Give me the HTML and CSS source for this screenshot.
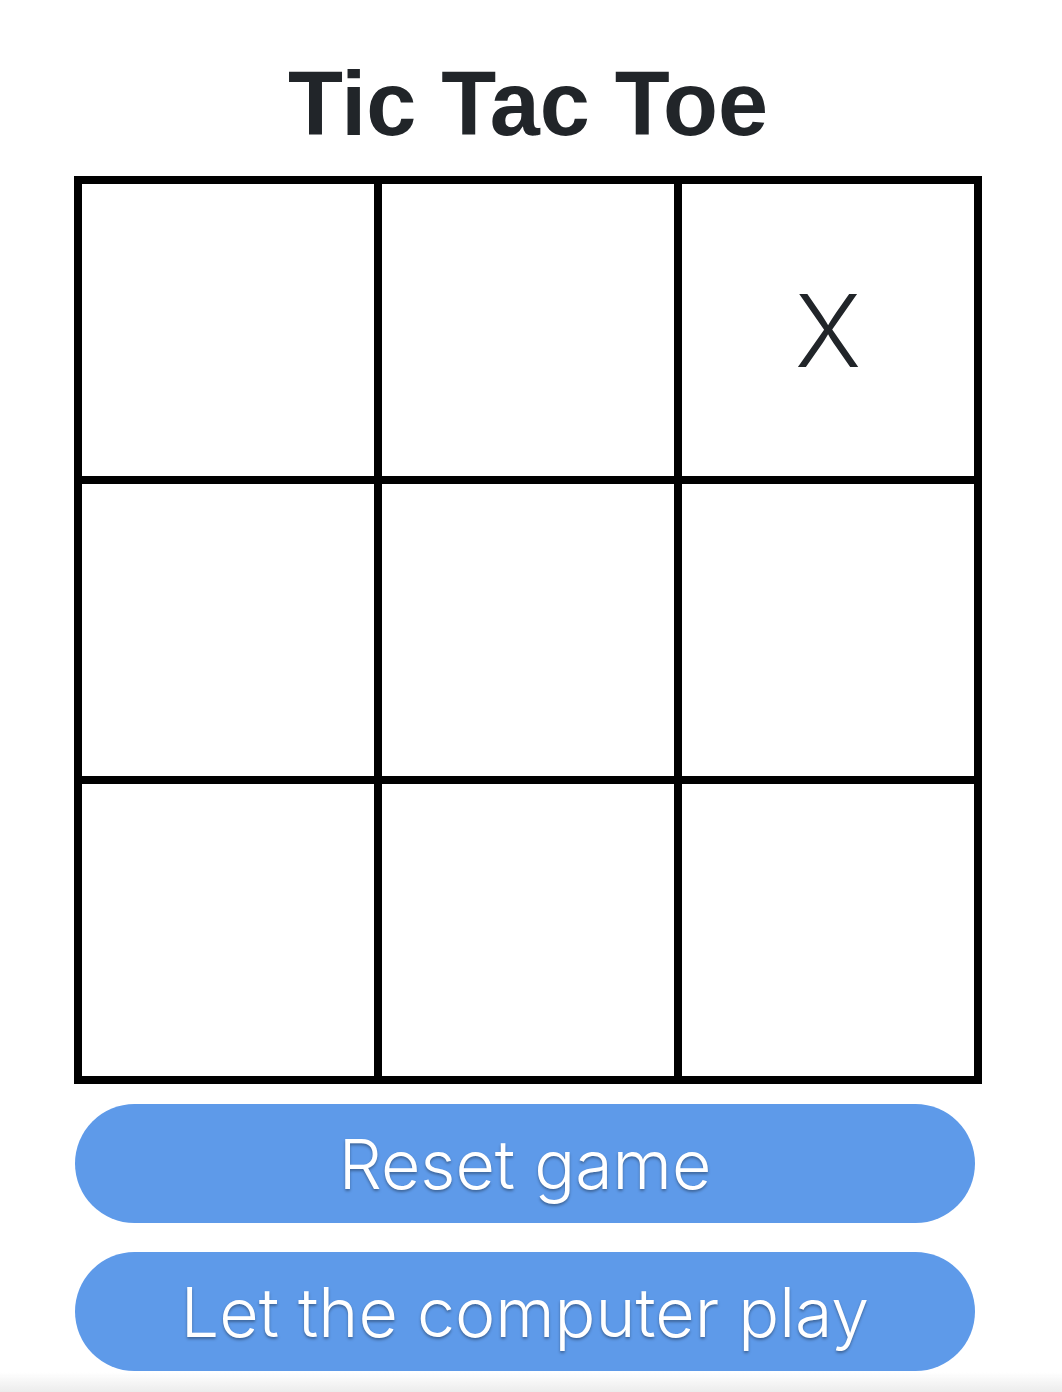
FILE: index.html
```html
<!DOCTYPE html>
<html lang="en">
<head>
<meta charset="utf-8">
<title>Tic Tac Toe</title>
<link rel="stylesheet" href="styles.css">
</head>
<body>
<main class="game">
  <h1 class="title">Tic Tac Toe</h1>
  <div class="board">
    <div class="cell"></div>
    <div class="cell"></div>
    <div class="cell">X</div>
    <div class="cell"></div>
    <div class="cell"></div>
    <div class="cell"></div>
    <div class="cell"></div>
    <div class="cell"></div>
    <div class="cell"></div>
  </div>
  <div class="actions">
    <button class="btn">Reset game</button>
    <button class="btn">Let the computer play</button>
  </div>
</main>
<div class="bottom-shade"></div>
</body>
</html>
```

FILE: styles.css
```css
html, body {
  margin: 0;
  padding: 0;
  background: #ffffff;
}

body {
  font-family: "Liberation Sans", Arial, sans-serif;
  color: #212529;
}

.game {
  width: 908px;
  padding: 0 0 0 74px;
}

.title {
  margin: 0;
  padding-top: 59px;
  height: 176px;
  box-sizing: border-box;
  font-size: 90px;
  line-height: 1;
  font-weight: 700;
  letter-spacing: 0;
  text-align: center;
  color: #212529;
}

.board {
  display: grid;
  grid-template-columns: repeat(3, 300px);
  grid-template-rows: repeat(3, 300px);
  border: 4px solid #000;
  width: 900px;
}

.cell {
  box-sizing: border-box;
  border: 4px solid #000;
  display: flex;
  align-items: center;
  justify-content: center;
  font-family: "Inter", "Liberation Sans", sans-serif;
  font-weight: 300;
  font-size: 100px;
  color: #212529;
}

.actions {
  display: flex;
  flex-direction: column;
  gap: 29px;
  padding: 20px 0 0 1px;
}

.btn {
  width: 900px;
  height: 119px;
  border: none;
  border-radius: 60px;
  background: #5e9ae9;
  color: #ffffff;
  font-family: "Inter", "Liberation Sans", sans-serif;
  font-weight: 300;
  font-size: 68px;
  text-shadow: 0 2px 3px rgba(0, 0, 0, 0.35);
  padding: 0;
}

.bottom-shade {
  position: fixed;
  left: 0;
  right: 0;
  bottom: 0;
  height: 20px;
  background: linear-gradient(to bottom, rgba(240, 240, 240, 0), #ececec);
}
```
